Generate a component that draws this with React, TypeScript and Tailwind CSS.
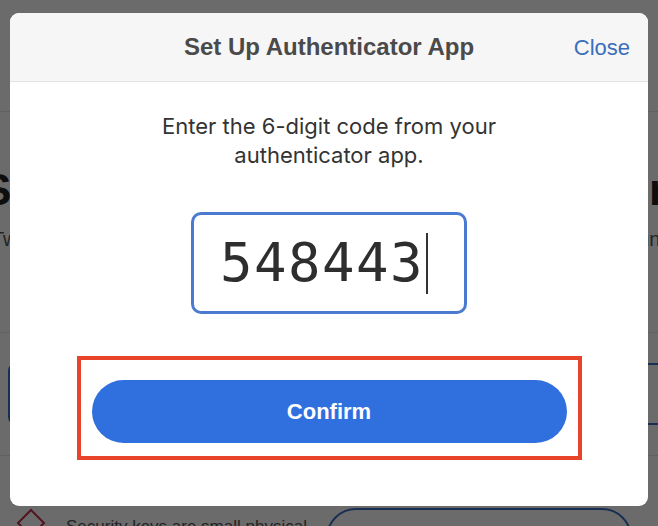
import React from 'react';

// Page behind the dialog, mostly hidden by the dim overlay
function SecurityPage() {
  return (
    <div className="flex flex-col w-full">
      <div className="h-[112px] border-b border-gray-200" />
      <div className="h-[220px] flex flex-col pt-[52px] overflow-hidden">
        <div className="flex justify-between items-center whitespace-nowrap text-[44px] font-bold text-[#222] leading-[52px] -mx-[18px]">
          <span>Security</span>
          <span>Authentication</span>
        </div>
        <div className="flex justify-between items-center whitespace-nowrap text-[20px] text-[#555] mt-[8px] -mx-[8px]">
          <span>Two-step verification</span>
          <span>for your account</span>
        </div>
      </div>
      <div className="h-[123px] border-t border-gray-200 flex items-center justify-between px-[8px]">
        <div className="w-[160px] h-[62px] rounded-lg border-2 border-[#3a6fc4]" />
        <div className="w-[160px] h-[62px] rounded-full border-2 border-[#3a6fc4] -mr-[110px]" />
      </div>
      <div className="border-t border-gray-200 flex items-start pt-[52px] pl-[16px] gap-[20px]">
        <svg width="30" height="30" viewBox="0 0 30 30" className="shrink-0">
          <path d="M15 2 L28 15 L15 28 L2 15 Z" fill="none" stroke="#c0324a" strokeWidth="2" />
        </svg>
        <p className="text-[17px] text-[#555] mt-[6px] w-[240px] whitespace-nowrap">Security keys are small physical</p>
        <div className="h-[60px] px-[60px] rounded-full border-2 border-[#3a6fc4] text-[#3a6fc4] text-[20px] font-semibold flex items-center whitespace-nowrap">
          Add a Security Key
        </div>
      </div>
    </div>
  );
}

function AuthenticatorDialog() {
  return (
    <div className="absolute left-[10px] top-[13px] w-[638px] h-[493px] bg-white rounded-[9px] overflow-hidden flex flex-col">
      <div className="relative h-[69px] shrink-0 bg-[#f6f6f6] border-b border-[#e2e3e5] flex items-center justify-center">
        <h2 className="text-[24px] font-bold text-[#4a4a4a] font-['Liberation_Sans',Arial,sans-serif]">
          Set Up Authenticator App
        </h2>
        <button className="absolute right-[18px] top-[22px] text-[22px] leading-[26px] text-[#3b6fbb] font-['Liberation_Sans',Arial,sans-serif]">
          Close
        </button>
      </div>

      <div className="flex flex-col items-center pt-[30px]">
        <p className="text-center text-[22px] leading-[29px] text-[#333] font-['Inter',sans-serif] w-[380px]">
          Enter the 6-digit code from your authenticator app.
        </p>

        <div className="mt-[42px] w-[276px] h-[102px] rounded-[10px] border-[3px] border-[#4a7bd0] flex items-center pl-[26px]">
          <span className="text-[54px] leading-none text-[#2e2e2e] font-['DejaVu_Sans_Mono',monospace] tracking-[1.5px]">
            548443
          </span>
          <span className="w-[1.5px] h-[61px] bg-[#333] ml-[2px]" />
        </div>

        <div className="mt-[42px] w-[505px] border-4 border-[#e8432b] pt-[20px] pb-[13px] px-[11px]">
          <button className="w-full h-[63px] rounded-full bg-[#2f6fde] text-white text-[22px] font-bold font-['Liberation_Sans',Arial,sans-serif]">
            Confirm
          </button>
        </div>
      </div>
    </div>
  );
}

export default function App() {
  return (
    <div className="relative w-[658px] h-[526px] overflow-hidden bg-white font-['Liberation_Sans',Arial,sans-serif]">
      <SecurityPage />
      <div className="absolute inset-0 bg-black/[0.58]" />
      <AuthenticatorDialog />
    </div>
  );
}
